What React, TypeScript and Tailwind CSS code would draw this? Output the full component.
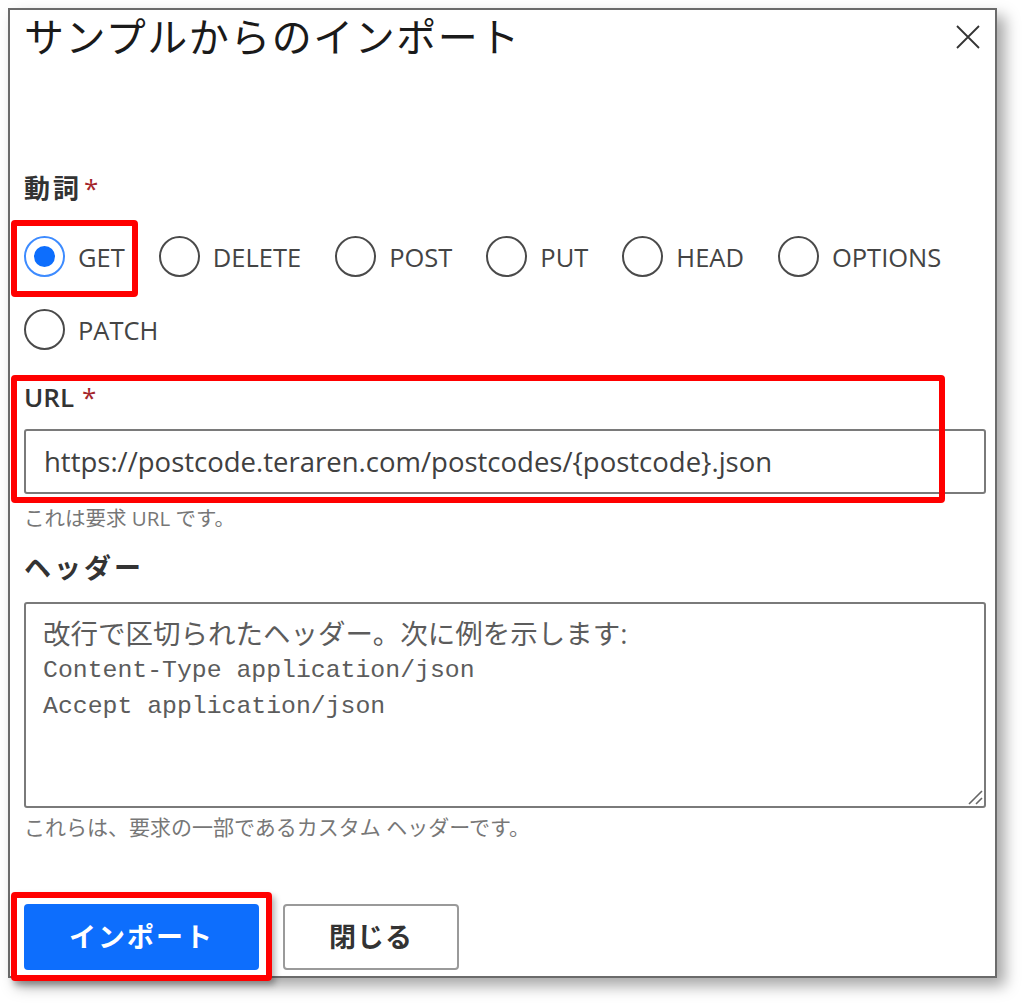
import React from "react";

const methods = ["GET", "DELETE", "POST", "PUT", "HEAD", "OPTIONS", "PATCH"];

function Radio({ label, checked }: { label: string; checked?: boolean }) {
  return (
    <label className="flex items-center gap-[13px]">
      {checked ? (
        <span className="flex h-[41px] w-[41px] items-center justify-center rounded-full border-2 border-[#3d8bff]">
          <span className="h-[21px] w-[21px] rounded-full bg-[#0d6efd]" />
        </span>
      ) : (
        <span className="h-[41px] w-[41px] rounded-full border-2 border-[#4a4a4a]" />
      )}
      <span className="text-[25.5px] leading-[26px] text-[#444]">{label}</span>
    </label>
  );
}

export default function App() {
  return (
    <div
      className="relative h-[1006px] w-[1024px] overflow-hidden bg-white"
      style={{ fontFamily: '"Open Sans", "Noto Sans CJK JP", sans-serif' }}
    >
      <div className="ml-2 mt-2 flex h-[970px] w-[989px] flex-col border-2 border-[#6b6b6b] bg-white pl-[14px] pr-[9px] shadow-[8px_8px_14px_rgba(0,0,0,0.35)]">
        {/* header */}
        <div className="flex items-start justify-between pt-[7px]">
          <h1 className="text-[40px] font-normal leading-[40px] tracking-[1.5px] text-[#1a1a1a]">
            サンプルからのインポート
          </h1>
          <svg className="mr-[6px] mt-[8px] h-6 w-6" viewBox="0 0 24 24" fill="none" stroke="#333" strokeWidth="1.8">
            <path d="M1 1 L23 23 M23 1 L1 23" />
          </svg>
        </div>

        {/* verb */}
        <div className="mt-[118px] text-[26px] font-bold leading-[26px] tracking-[3px] text-[#333]">
          動詞<span className="ml-0.5 font-normal text-[#a4262c]">*</span>
        </div>
        <div className="mt-[35px] flex flex-wrap gap-x-[34px] gap-y-[32px]">
          {methods.map((m) => (
            <Radio key={m} label={m} checked={m === "GET"} />
          ))}
        </div>

        {/* url */}
        <div className="mt-[34px] text-[26px] font-semibold leading-[26px] text-[#333]">
          URL<span className="ml-2 font-normal text-[#a4262c]">*</span>
        </div>
        <div className="mt-[19px] flex h-[65px] items-center rounded-[3px] border-2 border-[#7a7a7a] pl-[18px]">
          <span className="text-[27.5px] leading-[28px] text-[#404040]">
            https://postcode.teraren.com/postcodes/{"{postcode}"}.json
          </span>
        </div>
        <p className="mt-[14px] text-[20.5px] leading-[21px] text-[#777]">これは要求 URL です。</p>

        {/* headers */}
        <div className="mt-[25px] text-[27px] font-bold leading-[27px] tracking-[3px] text-[#333]">ヘッダー</div>
        <div className="relative mt-[21px] h-[206px] rounded-[3px] border-2 border-[#7a7a7a] pl-[17px] pt-[12px] text-[#5c5c5c]">
          <div className="text-[27.5px] leading-[36px]">改行で区切られたヘッダー。次に例を示します:</div>
          <div className="text-[24.8px] leading-[36px]" style={{ fontFamily: '"Liberation Mono", monospace' }}>
            Content-Type application/json
          </div>
          <div className="text-[24.8px] leading-[36px]" style={{ fontFamily: '"Liberation Mono", monospace' }}>
            Accept application/json
          </div>
          <svg className="absolute bottom-[1px] right-[1px] h-[18px] w-[18px]" viewBox="0 0 18 18" stroke="#666" strokeWidth="1.6">
            <path d="M17 4 L4 17 M17 11 L11 17" />
          </svg>
        </div>
        <p className="mt-[9px] text-[21px] leading-[21px] text-[#777]">
          これらは、要求の一部であるカスタム ヘッダーです。
        </p>

        {/* buttons */}
        <div className="mt-[66px] flex gap-[24px]">
          <button className="flex h-[66px] w-[235px] items-center justify-center rounded-[4px] bg-[#0d6efd] text-[27px] font-bold tracking-[2px] text-white">
            インポート
          </button>
          <button className="flex h-[66px] w-[176px] items-center justify-center rounded-[4px] border-2 border-[#9a9a9a] bg-white text-[27px] font-bold tracking-[1px] text-[#333]">
            閉じる
          </button>
        </div>
      </div>

      {/* red annotation boxes */}
      <div className="absolute left-[11px] top-[220px] h-[77px] w-[127px] rounded-[4px] border-[6px] border-[#ff0000]" />
      <div className="absolute left-[11px] top-[375px] h-[128px] w-[934px] rounded-[4px] border-[6px] border-[#ff0000]" />
      <div className="absolute left-[11px] top-[892px] h-[89px] w-[261px] rounded-[4px] border-[6px] border-[#ff0000] shadow-[3px_4px_6px_rgba(0,0,0,0.3)]" />
    </div>
  );
}
